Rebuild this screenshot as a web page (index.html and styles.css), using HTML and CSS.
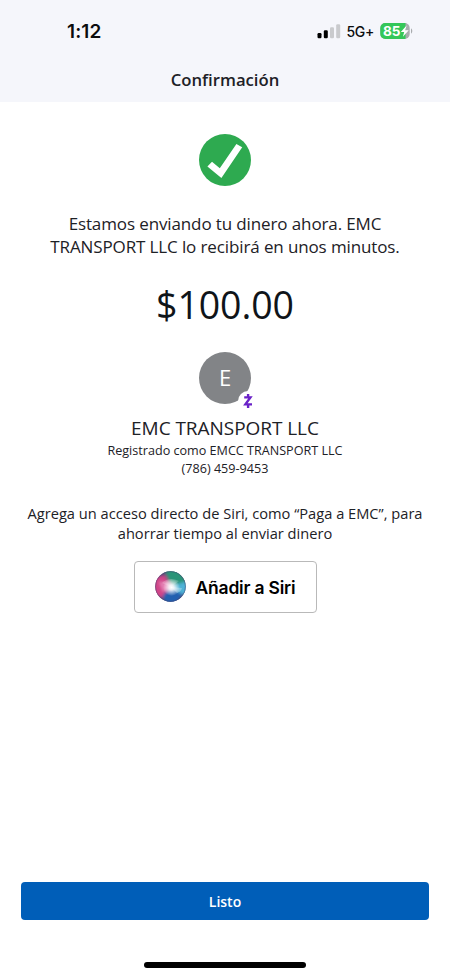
FILE: index.html
```html
<!DOCTYPE html>
<html lang="es">
<head>
    <meta charset="UTF-8">
    <meta name="viewport" content="width=device-width, initial-scale=1.0">
    <title>Confirmación</title>
    <link rel="stylesheet" href="styles.css">
</head>
<body>
    <div class="screen">
        <header class="header">
            <div class="status-bar">
                <span class="time">1:12</span>
                <div class="status-right">
                    <svg class="signal" width="24" height="15" viewBox="0 0 24 15">
                        <rect x="0.5" y="9" width="4" height="5.3" rx="1.2" fill="#000"/>
                        <rect x="6.8" y="6.3" width="4" height="8" rx="1.2" fill="#000"/>
                        <rect x="13" y="3.3" width="4" height="11" rx="1.2" fill="#c9cacd"/>
                        <rect x="19.2" y="0.3" width="4" height="14" rx="1.2" fill="#c9cacd"/>
                    </svg>
                    <span class="network">5G+</span>
                    <svg class="battery" width="34" height="16" viewBox="0 0 34 16">
                        <rect x="0.3" y="0" width="29.4" height="16" rx="5" fill="#a9acae"/>
                        <path d="M5.3 0H25.5V16H5.3a5 5 0 0 1-5-5V5a5 5 0 0 1 5-5z" fill="#34c759"/>
                        <path d="M31 5.5c1.7.6 1.7 4.4 0 5z" fill="#a9acae"/>
                        <text class="battery-text" x="3" y="12.7" textLength="17.5" lengthAdjust="spacingAndGlyphs">85</text>
                        <path d="M26.6 2.6L20.8 9h3.4l-1.3 4.8L28.7 7.2h-3.4z" fill="#fff"/>
                    </svg>
                </div>
            </div>
            <h1 class="title">Confirmación</h1>
        </header>

        <main class="content">
            <svg class="check" width="52" height="52" viewBox="0 0 52 52">
                <circle cx="26" cy="26" r="26" fill="#2eaa50"/>
                <path d="M13 27.8L20.8 34.2L37.4 10L43.2 13.2L22.4 44L8.4 32.4z" fill="#fff"/>
            </svg>

            <p class="message">Estamos enviando tu dinero ahora. EMC<br>TRANSPORT LLC lo recibirá en unos minutos.</p>
            <p class="amount">$100.00</p>

            <div class="avatar">
                E
                <svg class="zelle" width="20" height="20" viewBox="0 0 20 20">
                    <circle cx="10" cy="10" r="10" fill="#fff"/>
                    <path d="M6.2 6.4h6.2L7.4 13.4h6.6M10.1 3v3.4M10.1 13.4v3.6" fill="none" stroke="#6a22c8" stroke-width="2.4"/>
                </svg>
            </div>

            <h2 class="name">EMC TRANSPORT LLC</h2>
            <p class="detail">Registrado como EMCC TRANSPORT LLC</p>
            <p class="detail">(786) 459-9453</p>

            <p class="siri-text">Agrega un acceso directo de Siri, como “Paga a EMC”, para<br>ahorrar tiempo al enviar dinero</p>
            <button class="siri-btn">
                <svg class="siri-orb" width="31" height="31" viewBox="0 0 31 31">
                    <defs>
                        <clipPath id="orb"><circle cx="15.5" cy="15.5" r="15.2"/></clipPath>
                        <filter id="soft"><feGaussianBlur stdDeviation="1.6"/></filter>
                        <radialGradient id="glow" cx="0.5" cy="0.5" r="0.5">
                            <stop offset="0" stop-color="#fff"/>
                            <stop offset="0.3" stop-color="#fff" stop-opacity="0.85"/>
                            <stop offset="1" stop-color="#fff" stop-opacity="0"/>
                        </radialGradient>
                    </defs>
                    <g clip-path="url(#orb)">
                        <rect width="31" height="31" fill="#4a4a78"/>
                        <g filter="url(#soft)">
                            <path d="M-2 6L10 4L16 15L7 27L-2 25z" fill="#d04488"/>
                            <path d="M9 -2H24L33 12L16 15z" fill="#2a9478"/>
                            <path d="M33 10L16 15L25 25L33 22z" fill="#4fb2d6"/>
                            <path d="M8 24L16 17L27 23L22 33H10z" fill="#2460b0"/>
                            <path d="M4 11L14 11L16 17L8 21z" fill="#e580b4"/>
                        </g>
                        <path d="M7 12Q14 5 24 10Q20 13 16 16z" fill="#fff" opacity="0.22"/>
                        <path d="M16 16L27 17Q26 21 22 22z" fill="#fff" opacity="0.3"/>
                        <circle cx="16.5" cy="16.5" r="8.5" fill="url(#glow)"/>
                    </g>
                    <circle cx="15.5" cy="15.5" r="14.9" fill="none" stroke="#40406e" stroke-opacity="0.45" stroke-width="0.8"/>
                </svg>
                <span class="siri-label">Añadir a Siri</span>
            </button>
        </main>

        <footer class="footer">
            <button class="done-btn">Listo</button>
            <div class="home-bar"></div>
        </footer>
    </div>
</body>
</html>
```

FILE: styles.css
```css
* {
    box-sizing: border-box;
}
body {
    margin: 0;
    font-family: "Open Sans", sans-serif;
    color: #1d2126;
    background: white;
}
h1, h2, p {
    margin: 0;
    font-weight: 400;
    white-space: nowrap;
}
button {
    padding: 0;
    font-family: inherit;
    cursor: pointer;
}
.screen {
    width: 450px;
    height: 976px;
    display: flex;
    flex-direction: column;
    overflow: hidden;
}

/* header */
.header {
    height: 102px;
    background: #f5f6fb;
}
.status-bar {
    height: 62px;
    padding: 0 36px 0 67px;
    display: flex;
    justify-content: space-between;
    align-items: center;
}
.time {
    font-family: Inter, sans-serif;
    font-size: 19px;
    font-weight: 600;
    letter-spacing: 0.1px;
    color: #0b0c0e;
}
.status-right {
    display: flex;
    align-items: center;
}
.network {
    margin: 0 6px 0 5px;
    font-family: Inter, sans-serif;
    font-size: 14px;
    font-weight: 500;
    letter-spacing: -0.3px;
    color: #0b0c0e;
}
.battery-text {
    font-family: Inter, sans-serif;
    font-size: 13.5px;
    font-weight: 700;
    fill: white;
}
.title {
    font-size: 16.7px;
    font-weight: 600;
    line-height: 35px;
    text-align: center;
}

/* payment details */
.content {
    flex: 1;
    display: flex;
    flex-direction: column;
    align-items: center;
    padding-top: 32px;
    text-align: center;
}
.check {
    display: block;
}
.message {
    margin-top: 27.4px;
    font-size: 17px;
    line-height: 22.7px;
    letter-spacing: -0.12px;
}
.amount {
    margin-top: 21.4px;
    font-size: 37.5px;
    line-height: 50px;
    letter-spacing: -0.1px;
    color: #0f1419;
}
.avatar {
    position: relative;
    width: 52px;
    height: 52px;
    margin-top: 21.6px;
    border-radius: 50%;
    background: #828487;
    color: white;
    font-size: 22px;
    line-height: 51px;
}
.zelle {
    position: absolute;
    left: 39px;
    top: 39px;
}
.name {
    margin: 11px 0 1px;
    font-size: 19px;
    line-height: 26px;
    letter-spacing: -0.05px;
}
.detail {
    font-size: 12.6px;
    line-height: 18.5px;
}
.siri-text {
    margin-top: 25px;
    font-size: 14.65px;
    line-height: 19.8px;
}
.siri-btn {
    width: 183px;
    height: 52px;
    margin-top: 17.4px;
    display: flex;
    align-items: center;
    padding-left: 20px;
    gap: 10px;
    border: 1px solid #b9b9b9;
    border-radius: 4px;
    background: white;
}
.siri-label {
    padding-top: 1px;
    font-family: Inter, sans-serif;
    font-size: 17.5px;
    font-weight: 600;
    letter-spacing: -0.2px;
    color: #000;
    white-space: nowrap;
}

/* bottom */
.footer {
    height: 94px;
    padding: 0 21px;
}
.done-btn {
    display: block;
    width: 100%;
    height: 38px;
    border: none;
    border-radius: 4px;
    background: #005eb8;
    color: white;
    font-size: 14px;
    font-weight: 600;
}
.home-bar {
    width: 162px;
    height: 6px;
    margin: 42px auto 0;
    border-radius: 3px;
    background: #000;
}
```
